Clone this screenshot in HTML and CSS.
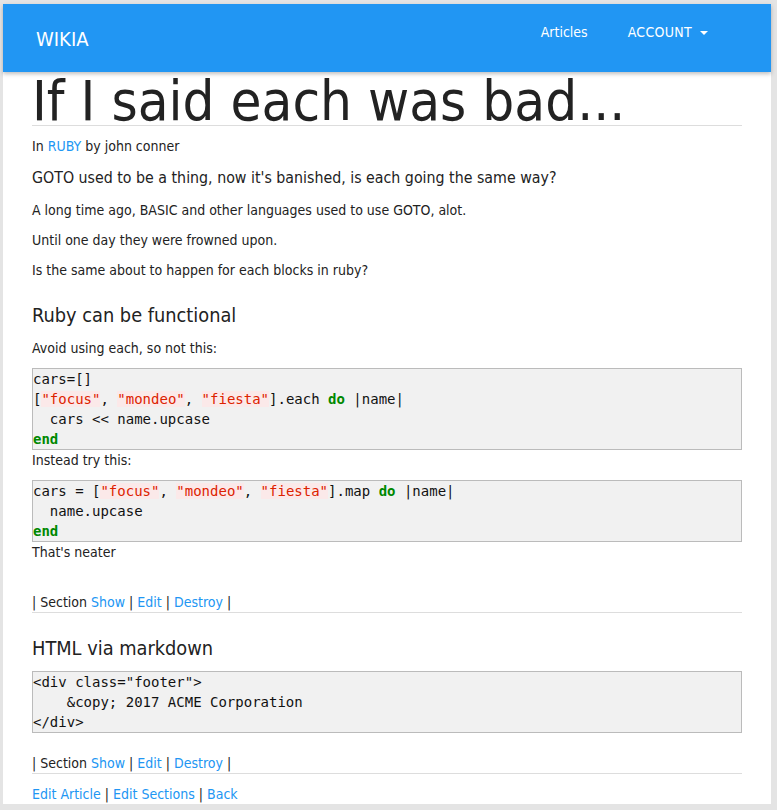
FILE: index.html
```html
<!DOCTYPE html>
<html>
<head>
<meta charset="utf-8">
<link rel="stylesheet" href="styles.css">
</head>
<body>
<div class="page">
  <nav class="navbar">
    <a class="brand" href="#">WIKIA</a>
    <ul class="nav-links">
      <li><a href="#" class="nav-articles">Articles</a></li>
      <li><a href="#" class="nav-account">ACCOUNT <span class="caret"></span></a></li>
    </ul>
  </nav>
  <main class="content">
    <h1 class="title">If I said each was bad...</h1>
    <p class="meta">In <a href="#">RUBY</a> by john conner</p>
    <p class="lead">GOTO used to be a thing, now it's banished, is each going the same way?</p>
    <p class="para">A long time ago, BASIC and other languages used to use GOTO, alot.</p>
    <p class="para">Until one day they were frowned upon.</p>
    <p class="para">Is the same about to happen for each blocks in ruby?</p>

    <section class="section">
      <h2 class="section-title">Ruby can be functional</h2>
      <p class="para">Avoid using each, so not this:</p>
      <pre class="code">cars=[]
[<span class="s">"focus"</span>, <span class="s">"mondeo"</span>, <span class="s">"fiesta"</span>].each <span class="k">do</span> |name|
  cars &lt;&lt; name.upcase
<span class="k">end</span></pre>
      <p class="para tight">Instead try this:</p>
      <pre class="code">cars = [<span class="s">"focus"</span>, <span class="s">"mondeo"</span>, <span class="s">"fiesta"</span>].map <span class="k">do</span> |name|
  name.upcase
<span class="k">end</span></pre>
      <p class="para tight last">That's neater</p>
      <div class="section-actions">| Section <a href="#">Show</a> | <a href="#">Edit</a> | <a href="#">Destroy</a> |</div>
    </section>

    <section class="section">
      <h2 class="section-title">HTML via markdown</h2>
      <pre class="code">&lt;div class="footer"&gt;
    &amp;copy; 2017 ACME Corporation
&lt;/div&gt;</pre>
      <div class="section-actions">| Section <a href="#">Show</a> | <a href="#">Edit</a> | <a href="#">Destroy</a> |</div>
    </section>

    <div class="article-actions"><a href="#">Edit Article</a> | <a href="#">Edit Sections</a> | <a href="#">Back</a></div>
  </main>
</div>
</body>
</html>
```

FILE: styles.css
```css
html, body {
  margin: 0;
  padding: 0;
}
body {
  background: #e4e4e4;
  font-family: "DejaVu Sans Condensed", "DejaVu Sans", sans-serif;
  font-stretch: condensed;
  color: #222;
  font-size: 14px;
  line-height: 20px;
  overflow: hidden;
  height: 810px;
}
a {
  color: #2196f3;
  text-decoration: none;
}
.page {
  background: #fff;
  margin: 4px 6px 0 3px;
  padding-bottom: 0;
}
.navbar {
  height: 68px;
  background: #2196f3;
  box-shadow: 0 2px 4px rgba(0,0,0,0.25);
  display: flex;
  align-items: flex-start;
  justify-content: space-between;
  padding: 0 63px 0 33px;
  position: relative;
}
.brand {
  color: #fff;
  font-size: 20px;
  line-height: 70px;
}
.nav-links {
  list-style: none;
  margin: 0;
  padding: 0;
  display: flex;
  gap: 40px;
  padding-top: 14px;
}
.nav-links a {
  color: #fff;
  font-size: 14px;
  line-height: 28px;
  display: flex;
  align-items: center;
}
.nav-account {
  text-transform: uppercase;
  letter-spacing: 0.3px;
}
.caret {
  display: inline-block;
  width: 0;
  height: 0;
  border-left: 4px solid transparent;
  border-right: 4px solid transparent;
  border-top: 4px solid #fff;
  margin-left: 8px;
  margin-top: 2px;
}
.content {
  padding: 0 29px;
}
.title {
  font-size: 56px;
  font-weight: normal;
  line-height: 48px;
  margin: 5px 0 0;
  padding: 0;
  border-bottom: 1px solid #ddd;
}
.meta {
  margin: 10px 0 0;
}
.lead {
  font-size: 15.8px;
  line-height: 22px;
  margin: 11px 0 0;
}
.para {
  margin: 10px 0 0;
}
.lead + .para {
  margin-top: 11px;
}
.para.tight {
  margin: 0;
}
.para.last {
  padding-bottom: 10px;
}
.section-title {
  font-size: 19.8px;
  font-weight: normal;
  line-height: 28px;
  margin: 22px 0 0;
}
.section + .section .section-title {
  margin-top: 22px;
}
.section-title + .para {
  margin-top: 8px;
}
.section-title + .code {
  margin-top: 8px;
}
.code {
  margin: 10px 0 0;
  background: #f1f1f1;
  border: 1px solid #bbb;
  font-family: "DejaVu Sans Mono", monospace;
  font-size: 14px;
  line-height: 20px;
  padding: 0;
  color: #111;
}
.s {
  color: #d20;
  background: #fbe9e9;
}
.k {
  color: #080;
  font-weight: bold;
}
.section-actions {
  margin-top: 20px;
  border-bottom: 1px solid #ddd;
}
.article-actions {
  margin-top: 10px;
  padding-bottom: 0;
}
```
